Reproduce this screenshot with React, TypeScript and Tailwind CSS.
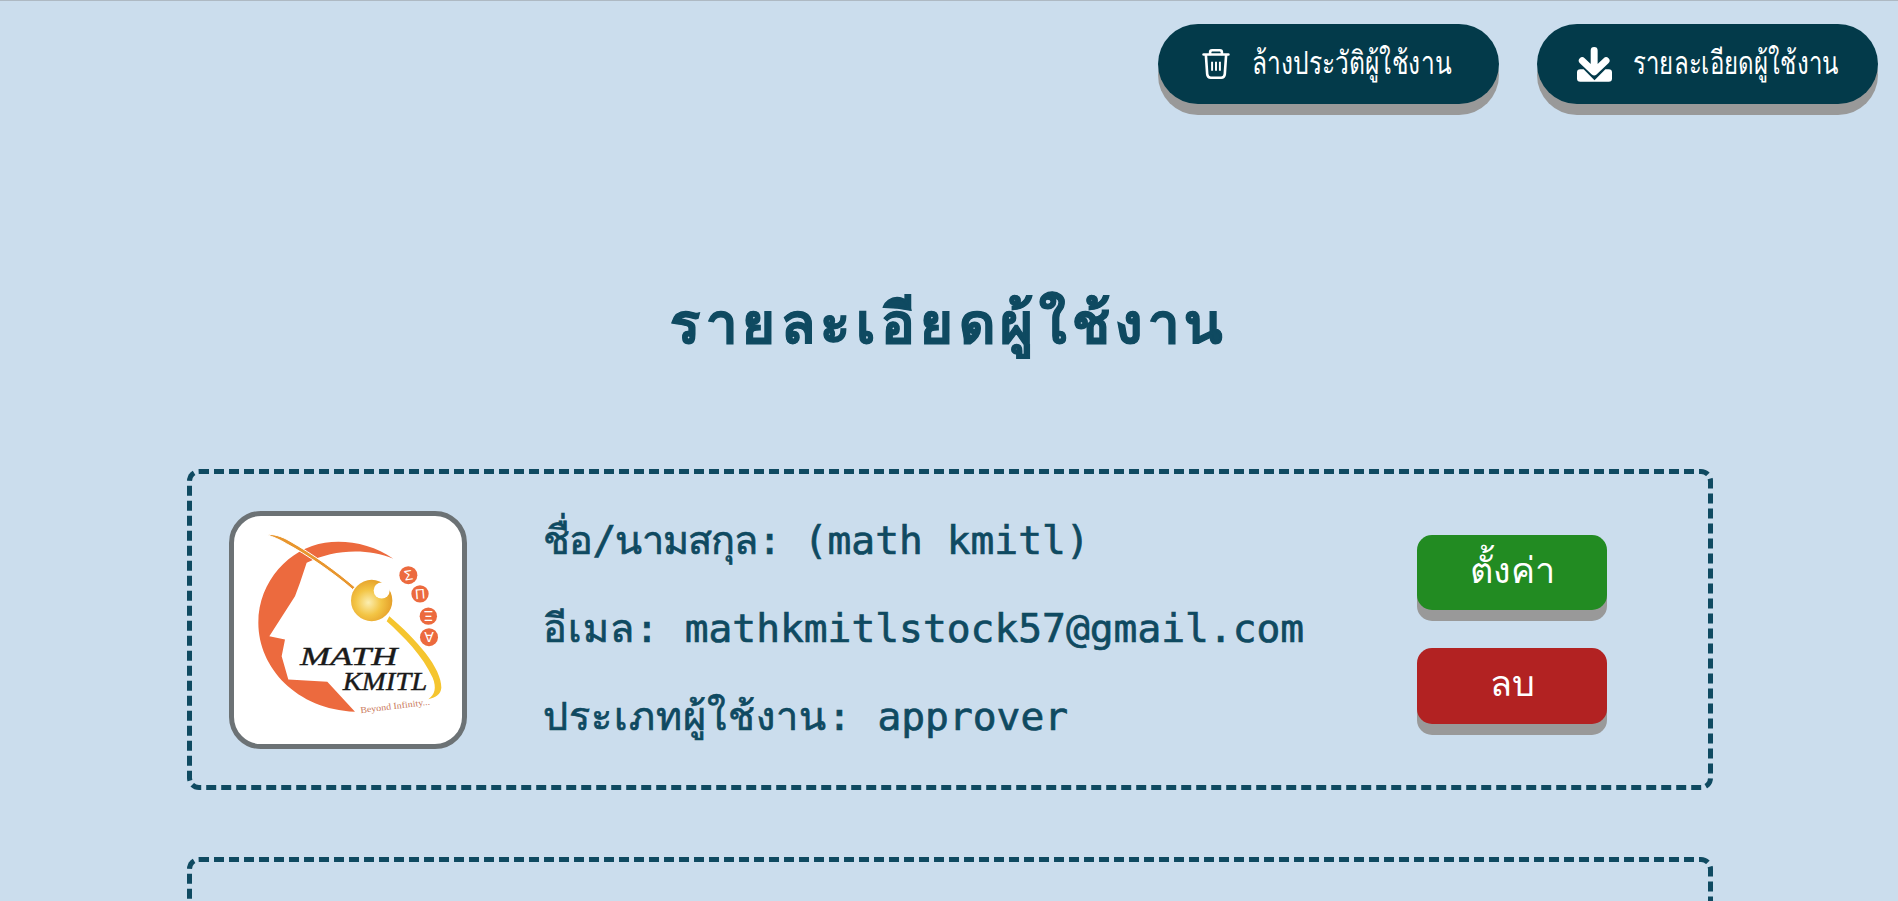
import React from 'react';

function TrashIcon() {
  return (
    <svg viewBox="36 143 84 92" className="w-[28px] h-[30px] shrink-0" fill="none" stroke="#fff" strokeWidth="8" strokeLinecap="round" strokeLinejoin="round">
      <path d="M40 160 L116 160" />
      <path d="M60 158 L60 152 Q60 147 66 147 L90 147 Q96 147 96 152 L96 158" />
      <path d="M47 162 L51 220 Q52 231 62 231 L94 231 Q104 231 105 220 L109 162" />
      <path d="M66 182 V210 M78 182 V210 M90 182 V210" strokeWidth="6" strokeLinecap="butt" />
    </svg>
  );
}

function DownloadIcon() {
  return (
    <svg viewBox="52 45 106 105" className="w-[35px] h-[35px] shrink-0">
      <path d="M52 122 Q52 112 62 112 L72 112 L105 145 L138 112 L148 112 Q158 112 158 122 L158 140 Q158 150 148 150 L62 150 Q52 150 52 140Z" fill="#fff" />
      <path d="M104 55 L104 115 M68 86 L104 120 L140 86" fill="none" stroke="#fff" strokeWidth="21" strokeLinecap="round" strokeLinejoin="round" />
    </svg>
  );
}

function Logo() {
  return (
    <svg viewBox="-18 -24 684 681" className="w-full h-full block">
      <defs>
        <radialGradient id="ball" cx="0.42" cy="0.55" r="0.62">
          <stop offset="0" stopColor="#fbeeb0" />
          <stop offset="0.5" stopColor="#f3c545" />
          <stop offset="1" stopColor="#e39a25" />
        </radialGradient>
      </defs>
      <path d="M460 103 C400 60 320 45 255 55 C150 70 55 170 55 295 C55 430 170 555 345 562 L262 472 L145 465 L125 395 L135 345 L88 335 L165 215 L180 175 L200 115 C280 75 380 70 460 103Z" fill="#ec6a3e" />
      <path d="M80 30 C100 28 125 35 150 50 C220 90 290 140 345 188 L338 195 C280 145 200 90 140 58 C120 45 100 38 80 30Z" fill="#e8962e" stroke="#fff" strokeWidth="3" />
      <path d="M448 275 C530 345 605 430 604 490 C603 510 585 520 565 524 C585 510 590 490 578 460 C550 395 490 335 440 290Z" fill="#f5c52f" />
      <circle cx="395" cy="228" r="62" fill="url(#ball)" />
      <circle cx="425" cy="198" r="24" fill="#fff" />
      <circle cx="505" cy="152" r="27" fill="#ec6a3e" />
      <circle cx="540" cy="208" r="26" fill="#ec6a3e" />
      <circle cx="565" cy="275" r="26" fill="#ec6a3e" />
      <circle cx="567" cy="338" r="27" fill="#ec6a3e" />
      <g fill="#fff" fontSize="42" textAnchor="middle" fontFamily="'Liberation Sans', sans-serif">
        <text x="505" y="167" transform="rotate(-10 505 152)">Σ</text>
        <text x="540" y="223" transform="rotate(-5 540 208)">Π</text>
        <text x="565" y="290" transform="rotate(180 565 275)">Ξ</text>
        <text x="567" y="353" transform="rotate(180 567 338)">A</text>
      </g>
      <g fill="#1a1a1a" stroke="#1a1a1a" strokeWidth="1.2" fontFamily="'Liberation Serif', serif" fontStyle="italic" fontSize="76">
        <text x="180" y="420" textLength="292" lengthAdjust="spacingAndGlyphs">MATH</text>
        <text x="308" y="497" textLength="254" lengthAdjust="spacingAndGlyphs">KMITL</text>
      </g>
      <text x="362" y="566" fontSize="27" fill="#c9785a" textLength="210" lengthAdjust="spacingAndGlyphs" fontFamily="'Liberation Serif', serif" transform="rotate(-7 362 566)">Beyond Infinity...</text>
    </svg>
  );
}

function UserCard({ name, email, role }: { name: string; email: string; role: string }) {
  return (
    <div className="ml-[187px] mr-[185px] h-[321px] shrink-0 flex items-center border-[5px] border-dashed border-[#0f4a61] rounded-[12px] pl-[37px] pr-[101px]">
      <div className="w-[238px] h-[238px] shrink-0 bg-white border-[5px] border-[#6c7275] rounded-[32px] overflow-hidden">
        <Logo />
      </div>
      <div className="ml-[76px] mb-[4px] flex flex-col gap-[40px] whitespace-nowrap text-[39.6px] leading-[48px] text-[#0f4a61] [-webkit-text-stroke:0.7px_#0f4a61] font-['DejaVu_Sans_Mono','Noto_Sans',monospace]">
        <p><span className="tracking-[-0.8px]">ชื่อ/นามสกุล: </span>{name}</p>
        <p><span className="tracking-[1px]">อีเมล: </span>{email}</p>
        <p><span className="tracking-[1.2px]">ประเภทผู้ใช้งาน: </span>{role}</p>
      </div>
      <div className="ml-auto flex flex-col gap-[38px] font-['Noto_Sans',sans-serif] text-[36px] text-white">
        <button className="w-[190px] h-[75px] pb-[6px] rounded-[15px] bg-[#228b22] shadow-[0_11px_0_#999999]">ตั้งค่า</button>
        <button className="w-[190px] h-[76px] pb-[6px] rounded-[15px] bg-[#b22222] shadow-[0_11px_0_#999999]">ลบ</button>
      </div>
    </div>
  );
}

export default function App() {
  return (
    <div className="h-screen overflow-hidden flex flex-col bg-[#cbdded] border-t border-[#aeb9c3]">
      <div className="flex justify-end gap-[38px] pt-[23px] pr-[20px] font-['Noto_Sans',sans-serif] text-[32px] text-white">
        <button className="w-[341px] h-[80px] rounded-[40px] bg-[#033a4a] shadow-[0_11px_0_#999999] flex items-center pl-[44px] gap-[22px]">
          <TrashIcon />
          <span className="inline-block origin-left scale-x-[0.767] whitespace-nowrap pb-[4px]">ล้างประวัติผู้ใช้งาน</span>
        </button>
        <button className="w-[341px] h-[80px] rounded-[40px] bg-[#033a4a] shadow-[0_11px_0_#999999] flex items-center pl-[40px] gap-[21px]">
          <DownloadIcon />
          <span className="inline-block origin-left scale-x-[0.75] whitespace-nowrap pb-[4px]">รายละเอียดผู้ใช้งาน</span>
        </button>
      </div>
      <h1 className="mt-[184px] text-center text-[56px] leading-[72px] tracking-[5.6px] font-bold text-[#0f4a61] [-webkit-text-stroke:1px_#0f4a61] font-['DejaVu_Sans_Mono','Noto_Sans',monospace]">
        รายละเอียดผู้ใช้งาน
      </h1>
      <div className="mt-[109px] flex flex-col gap-[67px]">
        <UserCard name="(math kmitl)" email="mathkmitlstock57@gmail.com" role="approver" />
        {/* only the top edge of the next card is in view */}
        <div className="ml-[187px] mr-[185px] h-[321px] shrink-0 border-[5px] border-dashed border-[#0f4a61] rounded-[12px]" />
      </div>
    </div>
  );
}
